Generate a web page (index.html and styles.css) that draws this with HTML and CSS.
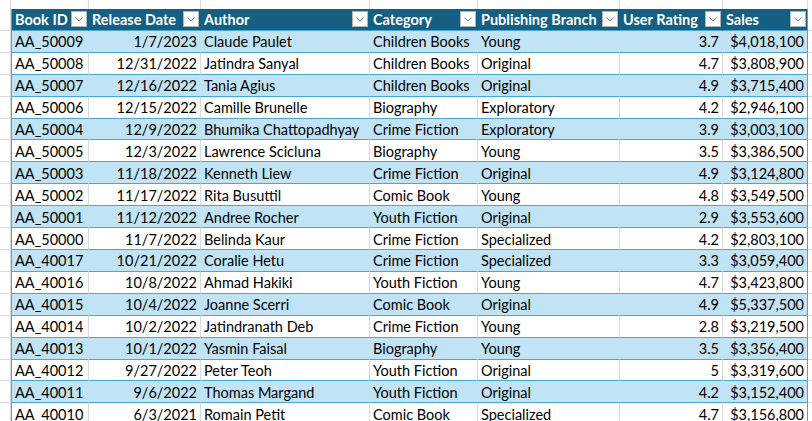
FILE: index.html
```html
<!DOCTYPE html>
<html>
<head>
<meta charset="utf-8">
<link rel="stylesheet" href="styles.css">
</head>
<body>
<div class="sheet">
  <div class="row top">
    <div class="gut"></div><div class="c w1"></div><div class="c w2"></div><div class="c w3"></div><div class="c w4"></div><div class="c w5"></div><div class="c w6"></div><div class="c w7"></div><div class="tail"></div>
  </div>
  <div class="row head">
    <div class="gut"></div>
    <div class="c w1 first"><span>Book ID</span><i class="fb"><svg viewBox="0 0 8 5" width="8" height="5"><polyline points="0.5,0.5 4,4 7.5,0.5"/></svg></i></div>
    <div class="c w2"><span>Release Date</span><i class="fb"><svg viewBox="0 0 8 5" width="8" height="5"><polyline points="0.5,0.5 4,4 7.5,0.5"/></svg></i></div>
    <div class="c w3"><span>Author</span><i class="fb"><svg viewBox="0 0 8 5" width="8" height="5"><polyline points="0.5,0.5 4,4 7.5,0.5"/></svg></i></div>
    <div class="c w4"><span>Category</span><i class="fb"><svg viewBox="0 0 8 5" width="8" height="5"><polyline points="0.5,0.5 4,4 7.5,0.5"/></svg></i></div>
    <div class="c w5"><span>Publishing Branch</span><i class="fb"><svg viewBox="0 0 8 5" width="8" height="5"><polyline points="0.5,0.5 4,4 7.5,0.5"/></svg></i></div>
    <div class="c w6"><span>User Rating</span><i class="fb"><svg viewBox="0 0 8 5" width="8" height="5"><polyline points="0.5,0.5 4,4 7.5,0.5"/></svg></i></div>
    <div class="c w7 last"><span>Sales</span><i class="fb"><svg viewBox="0 0 8 5" width="8" height="5"><polyline points="0.5,0.5 4,4 7.5,0.5"/></svg></i></div>
    <div class="tail"></div>
  </div>
  <div class="row band"><div class="gut"></div><div class="c w1 first">AA_50009</div><div class="c w2 r">1/7/2023</div><div class="c w3">Claude Paulet</div><div class="c w4">Children Books</div><div class="c w5">Young</div><div class="c w6 r">3.7</div><div class="c w7 r last">$4,018,100</div><div class="tail"></div></div>
  <div class="row"><div class="gut"></div><div class="c w1 first">AA_50008</div><div class="c w2 r">12/31/2022</div><div class="c w3">Jatindra Sanyal</div><div class="c w4">Children Books</div><div class="c w5">Original</div><div class="c w6 r">4.7</div><div class="c w7 r last">$3,808,900</div><div class="tail"></div></div>
  <div class="row band"><div class="gut"></div><div class="c w1 first">AA_50007</div><div class="c w2 r">12/16/2022</div><div class="c w3">Tania Agius</div><div class="c w4">Children Books</div><div class="c w5">Original</div><div class="c w6 r">4.9</div><div class="c w7 r last">$3,715,400</div><div class="tail"></div></div>
  <div class="row"><div class="gut"></div><div class="c w1 first">AA_50006</div><div class="c w2 r">12/15/2022</div><div class="c w3">Camille Brunelle</div><div class="c w4">Biography</div><div class="c w5">Exploratory</div><div class="c w6 r">4.2</div><div class="c w7 r last">$2,946,100</div><div class="tail"></div></div>
  <div class="row band"><div class="gut"></div><div class="c w1 first">AA_50004</div><div class="c w2 r">12/9/2022</div><div class="c w3">Bhumika Chattopadhyay</div><div class="c w4">Crime Fiction</div><div class="c w5">Exploratory</div><div class="c w6 r">3.9</div><div class="c w7 r last">$3,003,100</div><div class="tail"></div></div>
  <div class="row"><div class="gut"></div><div class="c w1 first">AA_50005</div><div class="c w2 r">12/3/2022</div><div class="c w3">Lawrence Scicluna</div><div class="c w4">Biography</div><div class="c w5">Young</div><div class="c w6 r">3.5</div><div class="c w7 r last">$3,386,500</div><div class="tail"></div></div>
  <div class="row band"><div class="gut"></div><div class="c w1 first">AA_50003</div><div class="c w2 r">11/18/2022</div><div class="c w3">Kenneth Liew</div><div class="c w4">Crime Fiction</div><div class="c w5">Original</div><div class="c w6 r">4.9</div><div class="c w7 r last">$3,124,800</div><div class="tail"></div></div>
  <div class="row"><div class="gut"></div><div class="c w1 first">AA_50002</div><div class="c w2 r">11/17/2022</div><div class="c w3">Rita Busuttil</div><div class="c w4">Comic Book</div><div class="c w5">Young</div><div class="c w6 r">4.8</div><div class="c w7 r last">$3,549,500</div><div class="tail"></div></div>
  <div class="row band"><div class="gut"></div><div class="c w1 first">AA_50001</div><div class="c w2 r">11/12/2022</div><div class="c w3">Andree Rocher</div><div class="c w4">Youth Fiction</div><div class="c w5">Original</div><div class="c w6 r">2.9</div><div class="c w7 r last">$3,553,600</div><div class="tail"></div></div>
  <div class="row"><div class="gut"></div><div class="c w1 first">AA_50000</div><div class="c w2 r">11/7/2022</div><div class="c w3">Belinda Kaur</div><div class="c w4">Crime Fiction</div><div class="c w5">Specialized</div><div class="c w6 r">4.2</div><div class="c w7 r last">$2,803,100</div><div class="tail"></div></div>
  <div class="row band"><div class="gut"></div><div class="c w1 first">AA_40017</div><div class="c w2 r">10/21/2022</div><div class="c w3">Coralie Hetu</div><div class="c w4">Crime Fiction</div><div class="c w5">Specialized</div><div class="c w6 r">3.3</div><div class="c w7 r last">$3,059,400</div><div class="tail"></div></div>
  <div class="row"><div class="gut"></div><div class="c w1 first">AA_40016</div><div class="c w2 r">10/8/2022</div><div class="c w3">Ahmad Hakiki</div><div class="c w4">Youth Fiction</div><div class="c w5">Young</div><div class="c w6 r">4.7</div><div class="c w7 r last">$3,423,800</div><div class="tail"></div></div>
  <div class="row band"><div class="gut"></div><div class="c w1 first">AA_40015</div><div class="c w2 r">10/4/2022</div><div class="c w3">Joanne Scerri</div><div class="c w4">Comic Book</div><div class="c w5">Original</div><div class="c w6 r">4.9</div><div class="c w7 r last">$5,337,500</div><div class="tail"></div></div>
  <div class="row"><div class="gut"></div><div class="c w1 first">AA_40014</div><div class="c w2 r">10/2/2022</div><div class="c w3">Jatindranath Deb</div><div class="c w4">Crime Fiction</div><div class="c w5">Young</div><div class="c w6 r">2.8</div><div class="c w7 r last">$3,219,500</div><div class="tail"></div></div>
  <div class="row band"><div class="gut"></div><div class="c w1 first">AA_40013</div><div class="c w2 r">10/1/2022</div><div class="c w3">Yasmin Faisal</div><div class="c w4">Biography</div><div class="c w5">Young</div><div class="c w6 r">3.5</div><div class="c w7 r last">$3,356,400</div><div class="tail"></div></div>
  <div class="row"><div class="gut"></div><div class="c w1 first">AA_40012</div><div class="c w2 r">9/27/2022</div><div class="c w3">Peter Teoh</div><div class="c w4">Youth Fiction</div><div class="c w5">Original</div><div class="c w6 r">5</div><div class="c w7 r last">$3,319,600</div><div class="tail"></div></div>
  <div class="row band"><div class="gut"></div><div class="c w1 first">AA_40011</div><div class="c w2 r">9/6/2022</div><div class="c w3">Thomas Margand</div><div class="c w4">Youth Fiction</div><div class="c w5">Original</div><div class="c w6 r">4.2</div><div class="c w7 r last">$3,152,400</div><div class="tail"></div></div>
  <div class="row"><div class="gut"></div><div class="c w1 first">AA_40010</div><div class="c w2 r">6/3/2021</div><div class="c w3">Romain Petit</div><div class="c w4">Comic Book</div><div class="c w5">Specialized</div><div class="c w6 r">4.7</div><div class="c w7 r last">$3,156,800</div><div class="tail"></div></div>
</div>
</body>
</html>
```
FILE: styles.css
```css
html, body {
  margin: 0;
  padding: 0;
  background: #ffffff;
  overflow: hidden;
}
.sheet {
  width: 812px;
  height: 421px;
  overflow: hidden;
  font-family: "Lato", "Liberation Sans", sans-serif;
  font-size: 14.5px;
  color: #000000;
}
.row {
  display: flex;
  height: 21.92px;
}
.row > div {
  box-sizing: border-box;
  flex: none;
}
.gut {
  width: 11px;
  border-right: 1px solid #d9d9d9;
  border-bottom: 1px solid #d9d9d9;
}
.tail {
  flex: 1 1 auto !important;
  border-bottom: 1px solid #d9d9d9;
}
.c {
  display: flex;
  align-items: center;
  padding: 2px 3px 0 3px;
  white-space: nowrap;
  overflow: hidden;
  border-right: 1px solid #d9d9d9;
  border-bottom: 1px solid #45a8dc;
  line-height: 18px;
}
.r { justify-content: flex-end; }
.w1 { width: 78px; }
.w2 { width: 112px; }
.w3 { width: 169px; }
.w4 { width: 108px; }
.w5 { width: 142px; }
.w6 { width: 103px; }
.w7 { width: 85px; }
.first { border-left: 1px solid #45a8dc; }
.last { border-right-color: #45a8dc !important; }

.top { height: 9px; }
.top .gut { border-bottom: none; }
.top .c { border-bottom: none; }
.top .tail { border-bottom: none; }

.band .c {
  background: #c0e4f5;
  border-right-color: #c0e4f5;
}

.head .c {
  background: #156082;
  border-right-color: #156082;
  color: #ffffff;
  font-weight: 700;
  justify-content: space-between;
  padding: 0 1px 0 3px;
}
.head .c span {
  padding-top: 2px;
}
.fb {
  display: flex;
  align-items: center;
  justify-content: center;
  width: 16px;
  height: 16px;
  box-sizing: border-box;
  background: #ffffff;
  border: 1px solid #b4b4b4;
  flex: none;
}
.fb svg polyline {
  fill: none;
  stroke: #7a7a7a;
  stroke-width: 1;
}
```
